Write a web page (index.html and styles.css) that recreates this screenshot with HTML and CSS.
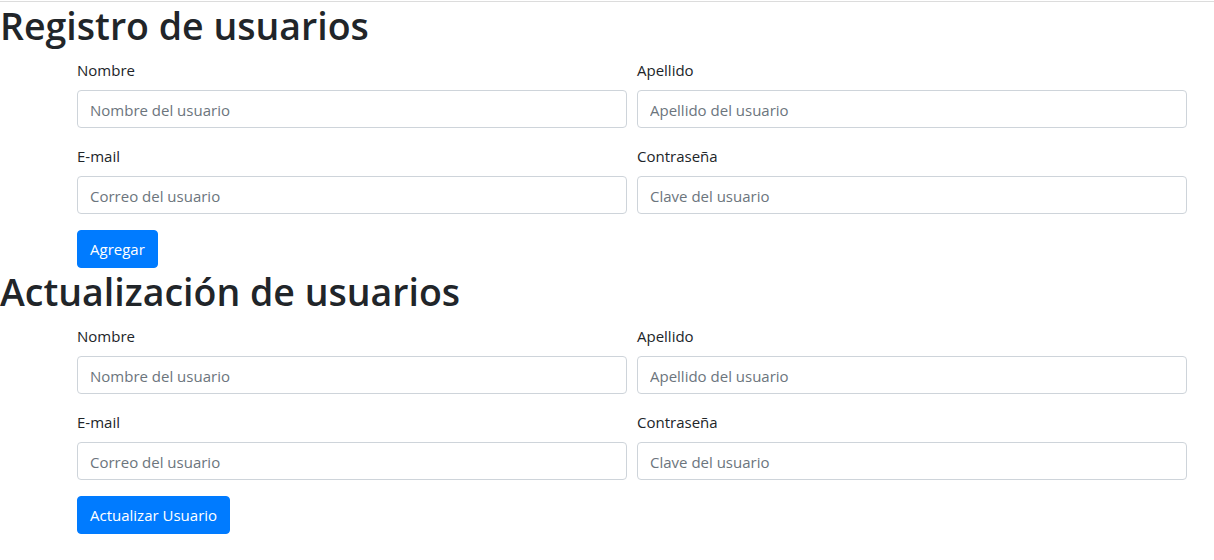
FILE: index.html
```html
<!DOCTYPE html>
<html lang="es">
<head>
<meta charset="utf-8">
<title>Usuarios</title>
<link rel="stylesheet" href="styles.css">
</head>
<body>
<div class="topline"></div>
<h1 class="title">Registro de usuarios</h1>
<form class="user-form">
  <div class="form-row">
    <div class="form-group">
      <label>Nombre</label>
      <input class="form-control" type="text" placeholder="Nombre del usuario">
    </div>
    <div class="form-group">
      <label>Apellido</label>
      <input class="form-control" type="text" placeholder="Apellido del usuario">
    </div>
  </div>
  <div class="form-row">
    <div class="form-group">
      <label>E-mail</label>
      <input class="form-control" type="text" placeholder="Correo del usuario">
    </div>
    <div class="form-group">
      <label>Contraseña</label>
      <input class="form-control" type="text" placeholder="Clave del usuario">
    </div>
  </div>
  <button type="button" class="btn">Agregar</button>
</form>
<h1 class="title">Actualización de usuarios</h1>
<form class="user-form">
  <div class="form-row">
    <div class="form-group">
      <label>Nombre</label>
      <input class="form-control" type="text" placeholder="Nombre del usuario">
    </div>
    <div class="form-group">
      <label>Apellido</label>
      <input class="form-control" type="text" placeholder="Apellido del usuario">
    </div>
  </div>
  <div class="form-row">
    <div class="form-group">
      <label>E-mail</label>
      <input class="form-control" type="text" placeholder="Correo del usuario">
    </div>
    <div class="form-group">
      <label>Contraseña</label>
      <input class="form-control" type="text" placeholder="Clave del usuario">
    </div>
  </div>
  <button type="button" class="btn">Actualizar Usuario</button>
</form>
</body>
</html>
```

FILE: styles.css
```css
* { box-sizing: border-box; }
html, body { margin: 0; padding: 0; background: #fff; }
body {
  font-family: "Open Sans", "Noto Sans", sans-serif;
  font-size: 16px;
  line-height: 1.5;
  color: #212529;
}
.topline { height: 2px; border-top: 1px solid #fff; border-bottom: 1px solid #dcdcdc; }
.title {
  margin: 0 0 8px 0;
  font-size: 37.5px;
  font-weight: 600;
  line-height: 48px;
}
.user-form { margin: 0 0 0 77px; width: 1110px; }
.form-row { display: flex; gap: 10px; }
.form-group { flex: 1 1 0; min-width: 0; margin-bottom: 16px; }
label { display: block; margin-bottom: 8px; font-size: 15px; line-height: 24px; }
.form-control {
  display: block;
  width: 100%;
  height: 38px;
  padding: 7px 12px 5px;
  font-family: inherit;
  font-size: 15px;
  line-height: 24px;
  color: #495057;
  background: #fff;
  border: 1px solid #ced4da;
  border-radius: 4px;
}
.form-control::placeholder { color: #6c757d; opacity: 1; }
.btn {
  display: inline-block;
  height: 38px;
  padding: 6px 12px;
  font-family: inherit;
  font-size: 15px;
  line-height: 24px;
  color: #fff;
  background: #007bff;
  border: 1px solid #007bff;
  border-radius: 4px;
}
```
